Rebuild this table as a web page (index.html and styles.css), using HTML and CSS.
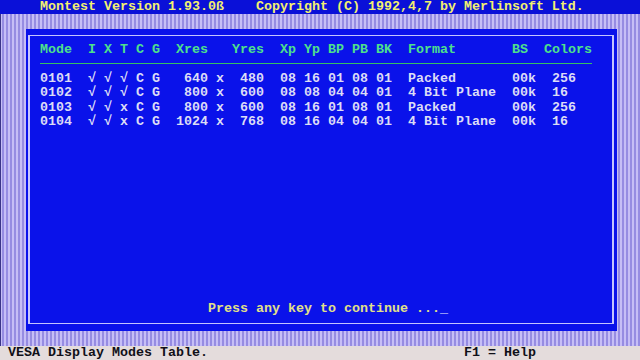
FILE: index.html
```html
<!DOCTYPE html>
<html lang="en">
<head>
    <meta charset="UTF-8">
    <title>Montest - VESA Display Modes</title>
    <link rel="stylesheet" href="styles.css">
</head>
<body>

<div class="screen">
    <div class="titlebar">     Montest Version 1.93.0ß    Copyright (C) 1992,4,7 by Merlinsoft Ltd.</div>

    <div class="desk">
        <div class="panel">
            <div class="frame">
                <div class="row head">Mode  I X T C G  Xres   Yres  Xp Yp BP PB BK  Format       BS  Colors</div>
                <div class="rule"></div>
                <div class="row">0101  √ √ √ C G   640 x  480  08 16 01 08 01  Packed       00k  256</div>
                <div class="row">0102  √ √ √ C G   800 x  600  08 08 04 04 01  4 Bit Plane  00k  16</div>
                <div class="row">0103  √ √ x C G   800 x  600  08 16 01 08 01  Packed       00k  256</div>
                <div class="row">0104  √ √ x C G  1024 x  768  08 16 04 04 01  4 Bit Plane  00k  16</div>

                <div class="row prompt">                     Press any key to continue ...<span class="cursor">_</span></div>
            </div>
        </div>
    </div>

    <div class="statusbar"> VESA Display Modes Table.                                F1 = Help</div>
</div>

</body>
</html>
```

FILE: styles.css
```css
* {
    margin: 0;
    padding: 0;
    box-sizing: border-box;
}
body {
    background: #000;
    font-family: 'Liberation Mono', 'DejaVu Sans Mono', monospace;
    font-size: 13.333px;
    font-weight: bold;
}
.screen {
    width: 640px;
    height: 360px;
    overflow: hidden;
}
.titlebar, .statusbar, .row {
    height: 14.4px;
    line-height: 14.4px;
    white-space: pre;
}
.titlebar {
    background: #0a10d8;
    color: #f2f070;
}
.desk {
    height: 331.2px;
    padding: 14.4px 0 0 26px;
    background: repeating-linear-gradient(90deg, #c6bef6 0 2px, #968ce2 2px 4px);
    box-shadow: inset 1px 0 0 #3a3488;
}
.panel {
    width: 591px;
    height: 302.4px;
    padding: 6.4px 3px 7.2px 2px;
    background: #0a12ea;
}
.frame {
    height: 100%;
    border: 1px solid #c4c4ff;
    border-width: 1px 2px;
    padding: 6.8px 0 6.2px 10px;
    display: flex;
    flex-direction: column;
    color: #dcdcf6;
}
.head {
    color: #4ee08c;
}
.rule {
    width: 552px;
    height: 14.4px;
    padding-top: 6px;
}
.rule::after {
    content: "";
    display: block;
    border-top: 1px solid #36c064;
}
.prompt {
    margin-top: auto;
    color: #e2e088;
}
.cursor {
    color: #f0f0ff;
}
.statusbar {
    background: #e4dcdc;
    color: #101018;
}
```
